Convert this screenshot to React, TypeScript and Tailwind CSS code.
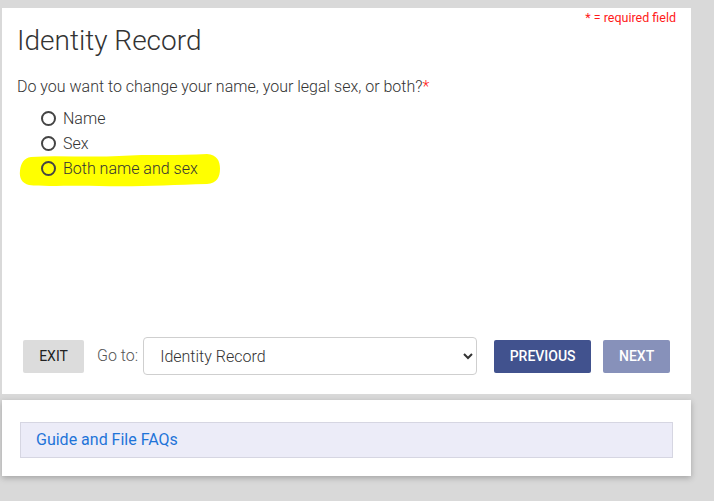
import React from "react";

function Radio({ label, highlight }: { label: string; highlight?: boolean }) {
  return (
    <label className="relative flex items-center h-[25px] pl-[24px] text-[16px] font-light text-[#333] cursor-pointer">
      {highlight && (
        <svg
          className="absolute left-[2px] top-[-3px] w-[202px] h-[35px]"
          viewBox="0 0 202 36"
          preserveAspectRatio="none"
          aria-hidden="true"
        >
          <path
            d="M12 4 C40 2 70 5 100 3 C130 1 160 3 188 1 C198 2 201 8 201 16 C201 25 198 31 188 32 C150 33 120 35 80 34 C50 33 25 35 10 33 C3 31 0 26 1 18 C2 10 5 5 12 4 Z"
            fill="#ffff00"
          />
        </svg>
      )}
      <span className="relative w-[15px] h-[15px] rounded-full border-2 border-[#444] bg-transparent shrink-0" />
      <span className="relative ml-[7px]">{label}</span>
    </label>
  );
}

export default function App() {
  return (
    <div
      className="w-[714px] min-h-[501px] bg-[#d9d9d9] pt-[8px] pl-[2px]"
      style={{ fontFamily: "Roboto, 'Liberation Sans', sans-serif" }}
    >
      <div className="w-[689px] h-[386px] bg-white flex flex-col">
        <div className="flex justify-between items-start pt-[16px] pl-[15px] pr-[15px]">
          <h1 className="text-[28px] leading-[34px] font-light text-[#333]">Identity Record</h1>
          <span className="mt-[-14px] text-[12.5px] leading-[16px] text-[#ff1a1a]">* = required field</span>
        </div>
        <p className="mt-[17px] pl-[15px] text-[16px] leading-[24px] font-light text-[#333]">
          Do you want to change your name, your legal sex, or both?<span className="text-[#ff1a1a]">*</span>
        </p>
        <div className="mt-[7px] pl-[15px] flex flex-col">
          <Radio label="Name" />
          <Radio label="Sex" />
          <Radio label="Both name and sex" highlight />
        </div>
        <div className="mt-auto pb-[19px] px-[21px] flex items-center">
          <button className="shrink-0 w-[61px] h-[33px] rounded-[2px] bg-[#dcdcdc] text-[14px] text-[#222] uppercase">
            Exit
          </button>
          <span className="shrink-0 whitespace-nowrap ml-[13px] text-[16px] font-light text-[#555]">Go to:</span>
          <select
            className="shrink-0 ml-[5px] w-[334px] h-[38px] rounded-[4px] border border-[#cfcfcf] bg-white pl-[12px] pr-[6px] text-[16px] font-light text-[#333] appearance-auto"
            defaultValue="Identity Record"
          >
            <option>Identity Record</option>
          </select>
          <button className="shrink-0 ml-[17px] w-[97px] h-[33px] rounded-[2px] bg-[#41528e] text-[14px] font-medium text-white uppercase">
            Previous
          </button>
          <button className="shrink-0 ml-[12px] w-[67px] h-[33px] rounded-[2px] bg-[#8791ba] text-[14px] font-medium text-white uppercase">
            Next
          </button>
        </div>
      </div>
      <div className="mt-[6px] w-[689px] h-[76px] bg-white pt-[22px] px-[18px] shadow-[0_2px_6px_rgba(0,0,0,0.25)]">
        <div className="h-[36px] bg-[#ececf8] border border-[#d6d6e2] flex items-center pl-[15px]">
          <a href="#" className="text-[16px] text-[#1f74d8]">Guide and File FAQs</a>
        </div>
      </div>
    </div>
  );
}
